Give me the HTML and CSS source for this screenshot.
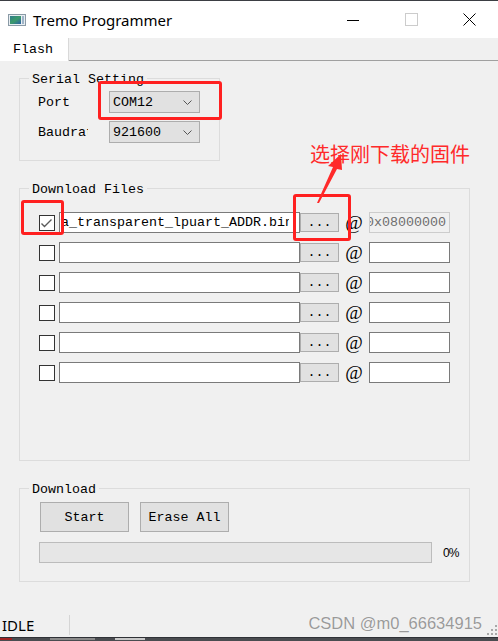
FILE: index.html
```html
<!DOCTYPE html>
<html lang="en">
<head>
  <meta charset="UTF-8">
  <title>Tremo Programmer</title>
  <link rel="stylesheet" href="styles.css">
</head>
<body>

<div class="window">
  <!-- Title bar -->
  <div class="titlebar">
    <svg class="app-icon" width="18" height="12" viewBox="0 0 18 12">
      <defs>
        <linearGradient id="ig" x1="0" y1="0" x2="1" y2="1">
          <stop offset="0" stop-color="#2f7d8c"/>
          <stop offset="0.5" stop-color="#3a9a6a"/>
          <stop offset="1" stop-color="#2d5fa8"/>
        </linearGradient>
      </defs>
      <rect x="0.5" y="0.5" width="17" height="11" fill="#e8eef2" stroke="#8a9aa6"/>
      <rect x="2" y="2" width="11" height="8" fill="url(#ig)"/>
      <rect x="14" y="2" width="2" height="8" fill="#9fb4c8"/>
    </svg>
    <span class="title">Tremo Programmer</span>
    <div class="caption-buttons">
      <span class="cap-btn">
        <svg width="12" height="12" viewBox="0 0 12 12"><path d="M0 6.5h12" stroke="#000"/></svg>
      </span>
      <span class="cap-btn">
        <svg width="13" height="13" viewBox="0 0 13 13"><rect x="0.5" y="0.5" width="12" height="12" fill="none" stroke="#cccccc"/></svg>
      </span>
      <span class="cap-btn">
        <svg width="13" height="13" viewBox="0 0 13 13"><path d="M0.5 0.5l12 12M12.5 0.5l-12 12" stroke="#000"/></svg>
      </span>
    </div>
  </div>

  <!-- Tabs -->
  <div class="tabs">
    <div class="tab active">Flash</div>
    <div class="tab-fill"></div>
  </div>

  <main class="content">
    <fieldset class="group serial">
      <legend>Serial Setting</legend>
      <div class="setting-row">
        <label class="setting-label">Port</label>
        <div class="combo">COM12
          <svg class="chevron" width="9" height="5" viewBox="0 0 9 5"><path d="M0.5 0.5l4 4 4-4" fill="none" stroke="#555"/></svg>
        </div>
      </div>
      <div class="setting-row">
        <label class="setting-label"><span class="clip">Baudrate</span></label>
        <div class="combo">921600
          <svg class="chevron" width="9" height="5" viewBox="0 0 9 5"><path d="M0.5 0.5l4 4 4-4" fill="none" stroke="#555"/></svg>
        </div>
      </div>
    </fieldset>

    <fieldset class="group files">
      <legend>Download Files</legend>
      <div class="file-row">
        <span class="check checked">
          <svg width="14" height="14" viewBox="0 0 14 14"><path d="M1.5 7.5l3 3 7-7" fill="none" stroke="#5a5a5a" stroke-width="1.4"/></svg>
        </span>
        <div class="path"><span class="path-text">ora_transparent_lpuart_ADDR.bin</span></div>
        <button class="browse">...</button>
        <span class="at">@</span>
        <div class="addr disabled"><span>0x08000000</span></div>
      </div>
      <div class="file-row">
        <span class="check"></span>
        <div class="path"></div>
        <button class="browse">...</button>
        <span class="at">@</span>
        <div class="addr"></div>
      </div>
      <div class="file-row">
        <span class="check"></span>
        <div class="path"></div>
        <button class="browse">...</button>
        <span class="at">@</span>
        <div class="addr"></div>
      </div>
      <div class="file-row">
        <span class="check"></span>
        <div class="path"></div>
        <button class="browse">...</button>
        <span class="at">@</span>
        <div class="addr"></div>
      </div>
      <div class="file-row">
        <span class="check"></span>
        <div class="path"></div>
        <button class="browse">...</button>
        <span class="at">@</span>
        <div class="addr"></div>
      </div>
      <div class="file-row">
        <span class="check"></span>
        <div class="path"></div>
        <button class="browse">...</button>
        <span class="at">@</span>
        <div class="addr"></div>
      </div>
    </fieldset>

    <fieldset class="group download">
      <legend>Download</legend>
      <div class="button-row">
        <button class="btn">Start</button>
        <button class="btn">Erase All</button>
      </div>
      <div class="progress-row">
        <div class="progress"></div>
        <span class="percent">0%</span>
      </div>
    </fieldset>
  </main>

  <div class="statusbar">
    <span class="status">IDLE</span>
    <span class="status-sep"></span>
    <svg class="grip" width="10" height="10" viewBox="0 0 10 10">
      <g fill="#a8a8a8">
        <rect x="8" y="0" width="2" height="2"/>
        <rect x="4" y="4" width="2" height="2"/><rect x="8" y="4" width="2" height="2"/>
        <rect x="0" y="8" width="2" height="2"/><rect x="4" y="8" width="2" height="2"/><rect x="8" y="8" width="2" height="2"/>
      </g>
    </svg>
  </div>
  <div class="taskbar">
    <span class="tb tb-red"></span>
    <span class="tb tb-gray"></span>
    <span class="tb tb-light"></span>
  </div>

  <!-- Annotations drawn over the screenshot -->
  <div class="mark mark-port"></div>
  <div class="mark mark-check"></div>
  <div class="mark mark-browse"></div>
  <svg class="arrow" width="60" height="60" viewBox="300 150 60 60">
    <path d="M341 154 L328 166 L333 167 L317 203 L319 203 L337 169 L342 170 Z" fill="#ff2a2a"/>
  </svg>
  <div class="note">选择刚下载的固件</div>
  <div class="watermark">CSDN @m0_66634915</div>
</div>

</body>
</html>
```

FILE: styles.css
```css
/* Basic window */
body {
  margin: 0;
  padding: 0;
  background-color: #f0f0f0;
  font-family: 'Liberation Mono', monospace;
  font-size: 13.33px;
  color: #000;
}
.window {
  position: relative;
  width: 498px;
  height: 641px;
  display: flex;
  flex-direction: column;
  overflow: hidden;
}

/* Title bar */
.titlebar {
  height: 37px;
  border-top: 1px solid #3b3e43;
  background-color: #fff;
  display: flex;
  align-items: center;
}
.app-icon {
  margin-left: 8px;
  margin-right: 7px;
}
.title {
  font-family: 'Noto Sans', sans-serif;
  font-size: 15px;
  color: #000;
}
.caption-buttons {
  margin-left: auto;
  display: flex;
  height: 100%;
}
.cap-btn {
  width: 58px;
  display: flex;
  align-items: center;
  justify-content: center;
}

/* Tabs */
.tabs {
  display: flex;
  height: 23px;
}
.tab {
  width: 69px;
  box-sizing: border-box;
  padding-left: 13px;
  line-height: 23px;
  background-color: #fff;
  border-right: 1px solid #d9d9d9;
}
.tab-fill {
  flex: 1;
  border-bottom: 1px solid #a0a0a0;
}

/* Content groups */
.content {
  flex: 1;
  padding: 7px 0 0 19px;
}
.group {
  margin: 0;
  border: 1px solid #dcdcdc;
  min-width: 0;
  box-sizing: border-box;
}
.group legend {
  padding: 4px 3px 0;
  margin-left: -10px;
  line-height: 16px;
}
.serial {
  width: 201px;
  padding: 3px 0 17px 19px;
}
.files {
  width: 451px;
  margin-top: 17px;
  padding: 14px 0 77px 19px;
}
.download {
  width: 451px;
  margin-top: 17px;
  padding: 4px 0 18px 20px;
}
.download legend {
  margin-left: -11px;
}

/* Serial setting */
.setting-row {
  display: flex;
  align-items: center;
  height: 22px;
}
.setting-row + .setting-row {
  margin-top: 8px;
}
.setting-label {
  width: 70px;
  margin-left: -1px;
  margin-right: 1px;
}
.setting-label .clip {
  display: inline-block;
  width: 50px;
  overflow: hidden;
  white-space: nowrap;
  vertical-align: top;
}
.combo {
  width: 91px;
  height: 22px;
  box-sizing: border-box;
  background-color: #e1e1e1;
  border: 1px solid #adadad;
  padding: 0 7px 0 3px;
  display: flex;
  align-items: center;
  justify-content: space-between;
}

/* Download files */
.file-row {
  display: flex;
  align-items: center;
  height: 21px;
}
.file-row + .file-row {
  margin-top: 9px;
}
.check {
  width: 16px;
  height: 16px;
  box-sizing: border-box;
  border: 1px solid #333;
  background-color: #fff;
  margin-right: 4px;
  display: flex;
}
.path {
  width: 241px;
  height: 21px;
  box-sizing: border-box;
  border: 1px solid #7a7a7a;
  background-color: #fff;
  overflow: hidden;
  white-space: nowrap;
  line-height: 19px;
}
.path-text {
  display: inline-block;
  margin-left: -15px;
  width: 244px;
  overflow: hidden;
  vertical-align: top;
}
.browse {
  width: 39px;
  height: 19px;
  padding: 0;
  margin: 0;
  background-color: #e1e1e1;
  border: 1px solid #adadad;
  font-family: 'Liberation Mono', monospace;
  font-size: 13.33px;
  line-height: 17px;
}
.at {
  width: 30px;
  text-align: center;
  font-family: 'Liberation Serif', serif;
  font-size: 19px;
}
.addr {
  width: 81px;
  height: 21px;
  box-sizing: border-box;
  border: 1px solid #7a7a7a;
  background-color: #fff;
  overflow: hidden;
  white-space: nowrap;
  line-height: 19px;
  display: flex;
  justify-content: flex-end;
  padding-right: 3px;
}
.addr.disabled {
  background-color: #f0f0f0;
  border-color: #cccccc;
  color: #6d6d6d;
}

/* Download */
.button-row {
  display: flex;
  gap: 11px;
}
.btn {
  width: 89px;
  height: 30px;
  margin: 0;
  padding: 0;
  background-color: #e1e1e1;
  border: 1px solid #adadad;
  font-family: 'Liberation Mono', monospace;
  font-size: 13.33px;
}
.progress-row {
  display: flex;
  align-items: center;
  margin-top: 10px;
  margin-left: -1px;
}
.progress {
  width: 393px;
  height: 21px;
  box-sizing: border-box;
  background-color: #e6e6e6;
  border: 1px solid #bcbcbc;
}
.percent {
  margin-left: 11px;
  font-family: 'Liberation Sans', sans-serif;
  font-size: 12px;
  letter-spacing: -1px;
}

/* Status bar */
.statusbar {
  height: 25px;
  display: flex;
  align-items: center;
}
.status {
  width: 67px;
  padding-left: 2px;
  font-family: 'Noto Sans', sans-serif;
  font-size: 15px;
}
.status-sep {
  width: 1px;
  height: 20px;
  background-color: #d5d5d5;
}
.grip {
  margin-left: auto;
  margin-right: 1px;
  margin-top: 10px;
}
.taskbar {
  height: 3px;
  border-top: 1px solid #2f3136;
  background-color: #4a4c50;
  display: flex;
}
.tb {
  height: 2px;
}
.tb-red { width: 12px; background-color: #a02020; }
.tb-gray { width: 45px; margin-left: 38px; background-color: #8a8a8a; }
.tb-light { width: 30px; margin-left: 20px; background-color: #c8c8c8; }

/* Red annotation marks */
.mark {
  position: absolute;
  border: 3px solid #ff2020;
  border-radius: 3px;
  box-sizing: border-box;
}
.mark-port {
  left: 98px;
  top: 81px;
  width: 124px;
  height: 39px;
}
.mark-check {
  left: 21px;
  top: 200px;
  width: 43px;
  height: 35px;
}
.mark-browse {
  left: 293px;
  top: 194px;
  width: 58px;
  height: 47px;
}
.arrow {
  position: absolute;
  left: 300px;
  top: 150px;
}
.note {
  position: absolute;
  left: 310px;
  top: 143px;
  font-family: 'Noto Sans CJK SC', sans-serif;
  font-size: 20px;
  line-height: 22px;
  color: #ff2a2a;
}
.watermark {
  position: absolute;
  right: 16px;
  top: 612px;
  font-family: 'Liberation Sans', sans-serif;
  font-size: 16.5px;
  line-height: 22px;
  color: #9a9a9a;
  text-shadow: 0 0 1px #fff;
}
```
